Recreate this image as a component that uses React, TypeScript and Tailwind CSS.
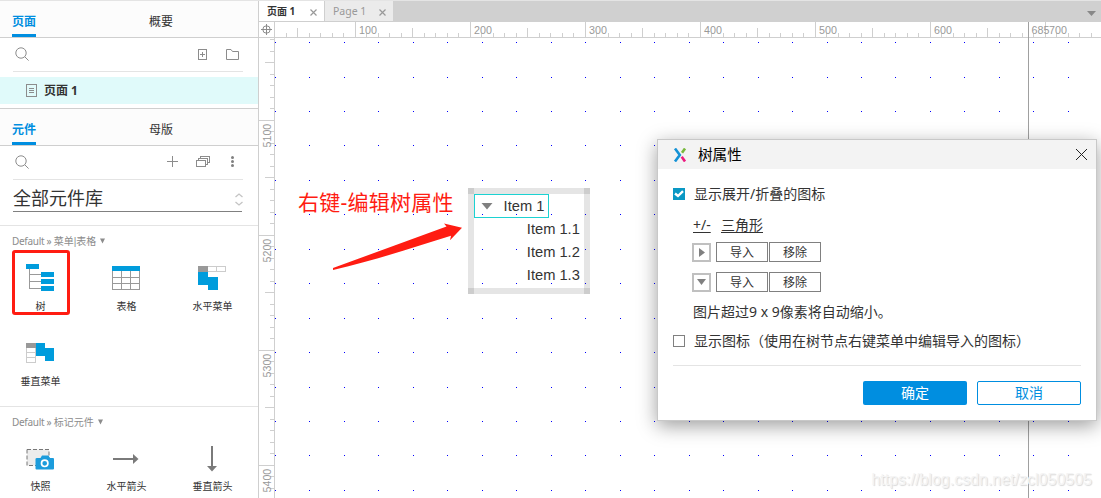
import type { ReactNode } from "react"
import { clsx } from "clsx"

const rulerTicks = Array.from({ length: 72 }, (_, i) => i - 6)
const rulerMajors = [100, 200, 300, 400, 500, 600, 700]
const verticalTicks = Array.from({ length: 40 }, (_, i) => i - 7)
const verticalMajors = [5100, 5200, 5300, 5400]

const dotCols = Array.from({ length: 24 }, (_, i) => Math.floor(275.34 + i * 34.48))
const dotRows = [42, 77, 111, 145, 180, 214, 249, 283, 318, 352, 387, 421, 455, 490]

function tickSize(i: number) {
  if (i % 10 === 0) return 15
  return i % 5 === 0 ? 9 : 4
}

function SearchIcon() {
  return (
    <svg className="mb-0.5" width="14" height="14" viewBox="0 0 14 14" fill="none" stroke="#8c8c8c">
      <circle cx="6" cy="6" r="5.2" />
      <path d="M9.8 9.8 L13.6 13.6" />
    </svg>
  )
}

function PanelTabs({ active, other }: { active: string; other: string }) {
  return (
    <div className="flex h-[37px] shrink-0 border-b border-[#cfcfcf] bg-[#fcfcfc] pl-3 text-xs text-[#333]">
      <div className="mr-[113px] w-6 border-b-[3px] border-[#008ee0] pt-3 leading-[18px] font-bold text-[#008ee0]">
        {active}
      </div>
      <div className="pt-3 leading-[18px]">{other}</div>
    </div>
  )
}

function SectionLabel({ children }: { children: ReactNode }) {
  return (
    <div className="flex h-4 items-center gap-1 pl-3 text-[10px] whitespace-nowrap text-[#8c8c8c]">
      <span>
        <span className="tracking-[-0.3px]">Default » </span>
        {children}
      </span>
      <svg width="5" height="6" viewBox="0 0 5 6" fill="#8c8c8c">
        <path d="M0 0.5 H5 L2.5 5.5 Z" />
      </svg>
    </div>
  )
}

function Widget({ label, children }: { label: string; children: ReactNode }) {
  return (
    <div className="flex w-[86px] flex-col items-center">
      <div className="h-8 w-7">{children}</div>
      <div className="mt-0.5 pl-px text-[10px] leading-4 whitespace-nowrap text-[#333]">{label}</div>
    </div>
  )
}

function TreeIcon() {
  return (
    <svg width="28" height="28" shapeRendering="crispEdges">
      <path d="M3.5 5 V24.5 H15 M3.5 10.5 H15 M3.5 17.5 H15" fill="none" stroke="#999" />
      <g fill="#009cdc">
        <rect width="13" height="5" />
        <rect x="15" y="8" width="13" height="5" />
        <rect x="15" y="15" width="13" height="5" />
        <rect x="15" y="22" width="13" height="5" />
      </g>
    </svg>
  )
}

function TableIcon() {
  return (
    <svg width="28" height="28" shapeRendering="crispEdges">
      <rect y="2" width="28" height="5" fill="#009cdc" />
      <path
        d="M0.5 7 V25.5 H27.5 V7 M9.5 7 V25 M18.5 7 V25 M0 13.5 H28 M0 19.5 H28"
        fill="none"
        stroke="#999"
      />
    </svg>
  )
}

function HorizontalMenuIcon() {
  return (
    <svg width="28" height="28" shapeRendering="crispEdges">
      <rect x="8.5" y="2.5" width="19" height="5" fill="none" stroke="#ccc" />
      <path d="M18.5 2 V8" stroke="#ccc" />
      <rect y="2" width="10" height="6" fill="#999" />
      <rect y="8" width="10" height="13" fill="#009cdc" />
      <rect x="10" y="13" width="10" height="13" fill="#009cdc" />
    </svg>
  )
}

function VerticalMenuIcon() {
  return (
    <svg width="28" height="28" shapeRendering="crispEdges">
      <path d="M0.5 8 V23.5 H9.5 V8 M0 13.5 H10 M0 18.5 H10" fill="none" stroke="#ccc" />
      <rect y="4" width="10" height="5" fill="#999" />
      <rect x="10" y="4" width="9" height="13" fill="#009cdc" />
      <rect x="19" y="9" width="9" height="13" fill="#009cdc" />
    </svg>
  )
}

function SnapshotIcon() {
  return (
    <svg width="28" height="28">
      <rect x="1" y="5.5" width="22" height="16" fill="#ececec" stroke="#777" strokeDasharray="4 2" />
      <path
        d="M11 14 H14.5 L16 11.5 H22.5 L24 14 H27 Q28 14 28 15 V24.5 Q28 25.5 27 25.5 H10.5 Q9.5 25.5 9.5 24.5 V15 Q9.5 14 11 14 Z"
        fill="#1c9cdc"
      />
      <circle cx="18.7" cy="19.3" r="3.2" fill="none" stroke="#fff" strokeWidth="1.7" />
    </svg>
  )
}

function Sidebar() {
  return (
    <aside className="flex w-[259px] shrink-0 flex-col overflow-hidden border-r border-[#cfcfcf] bg-white">
      <PanelTabs active="页面" other="概要" />
      <div className="mr-[15px] ml-[13px] flex h-[34px] shrink-0 items-center border-b border-[#e4e4e4] pl-0.5">
        <SearchIcon />
        <svg className="mb-px ml-auto" width="9" height="11" fill="none" stroke="#8c8c8c" shapeRendering="crispEdges">
          <path d="M0.5 0.5 H8.5 V10.5 H0.5 Z M4.5 3 V8 M2 5.5 H7" />
        </svg>
        <svg className="mr-1 mb-px ml-[19px]" width="13" height="11" fill="none" stroke="#8c8c8c">
          <path d="M0.5 0.5 H5 L6.5 2.5 H12.5 V10.5 H0.5 Z" />
        </svg>
      </div>
      <div className="mt-[5px] flex h-[27px] shrink-0 items-center gap-[7px] bg-[#e0fafa] pl-[26px] text-xs font-bold text-[#333]">
        <svg width="11" height="13" fill="none" stroke="#8c8c8c" shapeRendering="crispEdges">
          <path d="M0.5 0.5 H10.5 V12.5 H0.5 Z M3 4.5 H8 M3 6.5 H8 M3 8.5 H8" />
        </svg>
        <span className="leading-4">页面 1</span>
      </div>

      <div className="mt-1 shrink-0 border-t border-[#cfcfcf]">
        <PanelTabs active="元件" other="母版" />
      </div>
      <div className="mr-[15px] ml-[13px] flex h-[34px] shrink-0 items-center border-b border-[#e4e4e4] pl-0.5">
        <SearchIcon />
        <svg className="mb-0.5 ml-auto" width="11" height="11" stroke="#8c8c8c" shapeRendering="crispEdges">
          <path d="M5.5 0 V11 M0 5.5 H11" />
        </svg>
        <svg className="mb-0.5 ml-[18px]" width="14" height="11" fill="none" stroke="#8c8c8c" shapeRendering="crispEdges">
          <path d="M0.5 4.5 H9.5 V10.5 H0.5 Z M2.5 4 V2.5 H11.5 V8.5 H10 M4.5 2 V0.5 H13.5 V6.5 H12" />
        </svg>
        <svg className="mr-[9px] mb-0.5 ml-[21px]" width="3" height="11" fill="#808080">
          <circle cx="1.5" cy="1.5" r="1.5" />
          <circle cx="1.5" cy="5.5" r="1.5" />
          <circle cx="1.5" cy="9.5" r="1.5" />
        </svg>
      </div>
      <div className="mr-4 ml-[13px] flex h-8 shrink-0 items-center justify-between border-b border-[#808080] text-lg text-[#333]">
        <span className="pt-[5px] leading-6">全部元件库</span>
        <svg className="mt-2 -mr-px" width="8" height="13" fill="none" stroke="#c4c4c4" strokeWidth="1.3">
          <path d="M0.5 4 L4 1 L7.5 4 M0.5 9 L4 12 L7.5 9" />
        </svg>
      </div>

      <div className="mt-[13px] h-[181px] shrink-0 border-t border-[#e4e4e4] pt-[7px]">
        <SectionLabel>
          菜单<span className="font-['Liberation_Sans',sans-serif]">|</span>表格
        </SectionLabel>
        <div className="relative -ml-[3px] grid grid-cols-[86px_86px_86px] gap-y-[25px] pt-[15px]">
          <div className="absolute top-[1px] left-[15px] h-[65px] w-[58px] rounded-[3px] border-[3px] border-[#ff1c12]" />
          <Widget label="树"><TreeIcon /></Widget>
          <Widget label="表格"><TableIcon /></Widget>
          <Widget label="水平菜单"><HorizontalMenuIcon /></Widget>
          <Widget label="垂直菜单"><VerticalMenuIcon /></Widget>
        </div>
      </div>
      <div className="shrink-0 border-t border-[#e4e4e4] pt-[7px]">
        <SectionLabel>标记元件</SectionLabel>
        <div className="-ml-[3px] flex pt-[14px]">
          <Widget label="快照"><SnapshotIcon /></Widget>
          <Widget label="水平箭头">
            <svg width="28" height="28">
              <path d="M1 15 H23" stroke="#7a7a7a" strokeWidth="2" />
              <path d="M21 10 L26.5 15 L21 20 Z" fill="#7a7a7a" />
            </svg>
          </Widget>
          <Widget label="垂直箭头">
            <svg width="28" height="28">
              <path d="M14 2 V23" stroke="#7a7a7a" strokeWidth="2" />
              <path d="M9 22 H19 L14 27.5 Z" fill="#7a7a7a" />
            </svg>
          </Widget>
        </div>
      </div>
    </aside>
  )
}

function PageTabs() {
  return (
    <div className="flex h-[21px] shrink-0 bg-[#d0d0d0] text-[10px]">
      <div className="flex w-[66px] items-center border-r border-b border-[#cfcfcf] bg-white pr-[7px] pl-2 font-bold text-[#333]">
        <span className="leading-4">页面 1</span>
        <svg className="mt-0.5 ml-auto" width="7" height="7" stroke="#999" strokeWidth="1.2">
          <path d="M0.5 0.5 L6.5 6.5 M6.5 0.5 L0.5 6.5" />
        </svg>
      </div>
      <div className="flex w-[68px] items-center border-b border-[#cfcfcf] bg-[#ebebeb] pr-[7px] pl-2 text-[#999]">
        <span className="text-[10.5px] leading-4">Page 1</span>
        <svg className="mt-0.5 ml-auto" width="7" height="7" stroke="#999" strokeWidth="1.2">
          <path d="M0.5 0.5 L6.5 6.5 M6.5 0.5 L0.5 6.5" />
        </svg>
      </div>
      <svg className="mt-[10px] mr-[5px] ml-auto" width="9" height="5" fill="#888">
        <path d="M0 0 H9 L4.5 5 Z" />
      </svg>
    </div>
  )
}

// Rulers, grid and page guide share one coordinate space offset by (259, 22)
function CanvasGrid() {
  return (
    <svg
      className="block"
      width="842"
      height="476"
      viewBox="259 22 842 476"
      fontFamily="Liberation Sans, sans-serif"
      fontSize="10.7"
      shapeRendering="crispEdges"
    >
      <g fill="#cfcfcf">
        <rect x="259" y="37" width="842" height="1" />
        <rect x="274" y="22" width="1" height="476" />
        {rulerTicks.map((i) => (
          <rect key={i} x={Math.floor(355 + i * 11.5)} y={37 - tickSize(i)} width="1" height={tickSize(i)} />
        ))}
        {verticalTicks.map((i) => (
          <rect key={i} x={274 - tickSize(i)} y={Math.floor(120 + i * 11.5)} width={tickSize(i)} height="1" />
        ))}
      </g>
      <g fill="#999">
        {rulerMajors.map((n, i) => (
          <text key={n} x={359 + i * 115} y="33.5">{n}</text>
        ))}
        <text x="1031.5" y="33.5">685</text>
        {verticalMajors.map((n, i) => (
          <text key={n} transform={`translate(270.5 ${147.5 + i * 115}) rotate(-90)`}>{n}</text>
        ))}
      </g>
      <g fill="none" stroke="#8c8c8c" shapeRendering="auto">
        <circle cx="266.5" cy="29.5" r="3.7" />
        <path d="M266.5 24 V35 M261 29.5 H272" />
      </g>
      <g fill="#0000ff">
        {dotRows.map((y) => dotCols.map((x) => <rect key={`${x}-${y}`} x={x} y={y} width="1" height="1" />))}
      </g>
      <rect x="1028" y="22" width="1" height="476" fill="#a0a0a0" />
    </svg>
  )
}

function TreeWidget() {
  return (
    <div className="absolute top-[166px] left-[209px] h-[106px] w-[122px] border-[6px] border-black/10 font-['Liberation_Sans',sans-serif] text-[14.7px] leading-[23px] text-[#333]">
      <div className="absolute -top-1.5 -left-1.5 size-1.5 bg-black/10" />
      <div className="absolute -top-1.5 -right-1.5 size-1.5 bg-black/10" />
      <div className="absolute -bottom-1.5 -left-1.5 size-1.5 bg-black/10" />
      <div className="absolute -right-1.5 -bottom-1.5 size-1.5 bg-black/10" />
      <div className="flex h-6 w-[75px] items-center border border-[#1cd2d2] pl-1.5">
        <svg width="12" height="7" fill="#808080">
          <path d="M0.5 0 H11.5 L6 6.5 Z" />
        </svg>
        <span className="ml-[10.6px] whitespace-nowrap">Item 1</span>
      </div>
      <div className="pl-[52.8px] whitespace-nowrap">
        <div>Item 1.1</div>
        <div>Item 1.2</div>
        <div>Item 1.3</div>
      </div>
    </div>
  )
}

function ImportRow({ arrow }: { arrow: "right" | "down" }) {
  return (
    <div className="flex h-5 items-end">
      <div className="mr-[5px] flex size-[19px] items-center justify-center border-2 border-[#c0c0c0]">
        <svg width="9" height="9" fill="#808080">
          <path d={arrow === "right" ? "M2 0 L8 4.5 L2 9 Z" : "M0 1 H9 L4.5 7 Z"} />
        </svg>
      </div>
      <button className="mr-px h-5 w-[52px] border border-[#808080] pt-px text-xs leading-[18px]">导入</button>
      <button className="h-5 w-[52px] border border-[#808080] pt-px text-xs leading-[18px]">移除</button>
    </div>
  )
}

function CheckRow({ checked, children }: { checked?: boolean; children: ReactNode }) {
  return (
    <div className="flex h-5 items-center gap-[9px]">
      <span
        className={clsx(
          "flex size-3 items-center justify-center",
          checked ? "bg-[#0a98c4]" : "border border-[#808080]"
        )}
      >
        {checked && (
          <svg width="10" height="8" fill="none" stroke="#fff" strokeWidth="2.4">
            <path d="M1 3.5 L4 6 L9 1.2" />
          </svg>
        )}
      </span>
      <span className="whitespace-nowrap">{children}</span>
    </div>
  )
}

function TreeDialog() {
  return (
    <div className="absolute top-[139px] left-[657px] flex h-[282px] w-[440px] flex-col border border-[#c8c8c8] bg-white text-sm leading-5 text-[#333] shadow-[0_5px_18px_rgba(0,0,0,0.38)]">
      <div className="flex h-[29px] items-center bg-[#f3f3f3] pr-[9px] pl-[15px] text-[14.6px] text-black">
        <svg width="14" height="14" fill="none" strokeWidth="2.6">
          <path d="M2 0.5 L6.8 7 L2 13.5" stroke="#1592d6" />
          <path d="M12 0.5 L9 4.8" stroke="#78b83c" />
          <path d="M8.7 8.8 L12 13.5" stroke="#ec1a80" />
        </svg>
        <span className="ml-[11px] pb-0.5">树属性</span>
        <svg className="ml-auto" width="11" height="11" stroke="#222" strokeWidth="1">
          <path d="M0 0 L11 11 M11 0 L0 11" />
        </svg>
      </div>
      <div className="flex flex-1 flex-col px-[15px] pt-[15px]">
        <CheckRow checked>显示展开/折叠的图标</CheckRow>
        <div className="mt-[11px] ml-5 flex gap-[10px]">
          <span className="w-[18px] underline underline-offset-2">+/-</span>
          <span className="underline underline-offset-2">三角形</span>
        </div>
        <div className="mt-[7px] ml-[19px] flex flex-col gap-[10px]">
          <ImportRow arrow="right" />
          <ImportRow arrow="down" />
        </div>
        <div className="mt-[10px] mb-[9px] ml-5">图片超过9 x 9像素将自动缩小。</div>
        <CheckRow>显示图标（使用在树节点右键菜单中编辑导入的图标）</CheckRow>
        <div className="mt-[14px] flex justify-end gap-[10px] border-t border-[#e4e4e4] pt-[15px]">
          <button className="h-6 w-[104px] rounded-[2px] bg-[#008ee0] text-white">确定</button>
          <button className="h-6 w-[104px] rounded-[2px] border border-[#008ee0] text-[#008ee0]">取消</button>
        </div>
      </div>
    </div>
  )
}

export default function App() {
  return (
    <div className="relative flex h-[498px] w-[1101px] overflow-hidden border-t border-[#e4e4e4] bg-white font-['Noto_Sans','Noto_Sans_CJK_SC',sans-serif]">
      <Sidebar />
      <main className="flex min-w-0 flex-1 flex-col">
        <PageTabs />
        <div className="relative h-[476px]">
          <CanvasGrid />
          <div className="absolute top-[165px] left-[39px] text-[21px] leading-[30px] tracking-[0.25px] whitespace-nowrap text-[#ff1c12]">
            右键-编辑树属性
          </div>
          <svg className="absolute top-[200px] left-[73px]" width="132" height="50" fill="#ff1c12">
            <path d="M1 46 L114.5 4.5 L112 1.5 L130 5.7 L118 18.3 L119 13.8 C85 24 45 38 1 48 Z" />
          </svg>
          <TreeWidget />
          <div className="absolute right-[9px] bottom-[8px] font-['Liberation_Sans',sans-serif] text-base leading-5 whitespace-nowrap text-[#f4f4f4] [text-shadow:1px_1px_1px_#d8d8d8]">
            https://blog.csdn.net/zcl050505
          </div>
        </div>
      </main>
      <div className="absolute -top-px left-0">
        <TreeDialog />
      </div>
    </div>
  )
}
